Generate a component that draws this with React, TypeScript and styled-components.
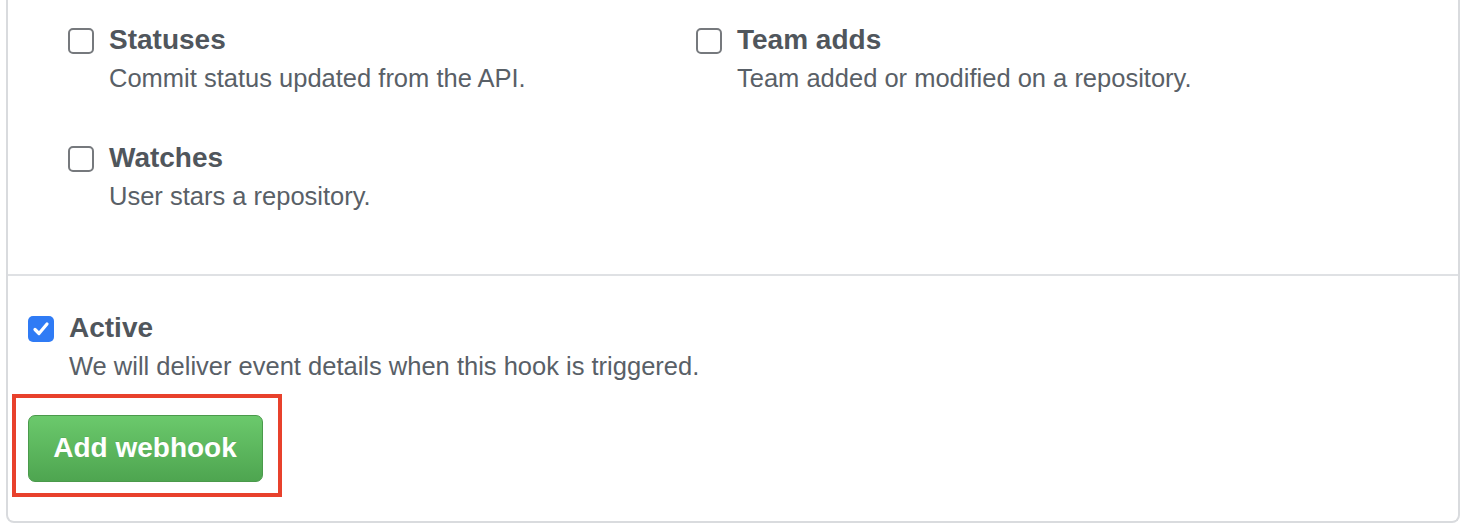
import React from "react";
import styled, { createGlobalStyle } from "styled-components";

const Global = createGlobalStyle`
  html, body { margin: 0; padding: 0; background: #ffffff; }
  body { font-family: "Liberation Sans", Arial, sans-serif; }
  * { box-sizing: border-box; }
`;

const Page = styled.div`
  width: 1468px;
  height: 530px;
  padding: 0 8px 7px 6px;
  overflow: hidden;
`;

const Panel = styled.div`
  height: 523px;
  border: 2px solid #d9dbde;
  border-top: none;
  border-radius: 0 0 8px 8px;
  display: flex;
  flex-direction: column;
`;

const Events = styled.div`
  display: grid;
  grid-template-columns: 628px 628px;
  align-content: start;
  row-gap: 45px;
  padding: 22px 0 0 60px;
  height: 276px;
  border-bottom: 2px solid #dfe1e4;
`;

const Item = styled.label`
  display: flex;
  align-items: flex-start;
  gap: 15px;
`;

const Box = styled.span<{ $checked?: boolean }>`
  flex: none;
  width: 26px;
  height: 26px;
  margin-top: 6px;
  border-radius: 5px;
  border: ${(p) => (p.$checked ? "none" : "2px solid #76797d")};
  background: ${(p) => (p.$checked ? "#2f7bf5" : "#ffffff")};
  display: flex;
  align-items: center;
  justify-content: center;
`;

const Text = styled.div`
  display: flex;
  flex-direction: column;
`;

const Title = styled.div`
  font-weight: 700;
  font-size: 28px;
  line-height: 36px;
  color: #50565c;
`;

const Desc = styled.div`
  font-size: 25.5px;
  line-height: 34px;
  margin-top: 3px;
  color: #596067;
`;

const ActiveSection = styled.div`
  padding: 34px 0 0 20px;
  display: flex;
  flex-direction: column;
`;

const Highlight = styled.div`
  align-self: flex-start;
  margin: 11px 0 0 -16px;
  border: 4.5px solid #e8412c;
  padding: 16.5px 15.5px 11.5px 11.5px;
`;

const Button = styled.button`
  width: 235px;
  height: 67px;
  border-radius: 7px;
  border: 1.5px solid #4a9a4b;
  background: linear-gradient(180deg, #6bc96c 0%, #4ea550 100%);
  color: #ffffff;
  font-family: "Liberation Sans", Arial, sans-serif;
  font-weight: 700;
  font-size: 28px;
  padding: 0;
  text-shadow: 0 -1px 0 rgba(0, 0, 0, 0.08);
`;

const Check = () => (
  <svg width="18" height="16" viewBox="0 0 18 16">
    <path d="M3 8.5 L7 12.5 L15 3" fill="none" stroke="#ffffff" strokeWidth="3.2" strokeLinecap="round" strokeLinejoin="round" />
  </svg>
);

const events = [
  { title: "Statuses", desc: "Commit status updated from the API." },
  { title: "Team adds", desc: "Team added or modified on a repository." },
  { title: "Watches", desc: "User stars a repository." },
];

export default function App() {
  return (
    <>
      <Global />
      <Page>
        <Panel>
          <Events>
            {events.map((e) => (
              <Item key={e.title}>
                <Box />
                <Text>
                  <Title>{e.title}</Title>
                  <Desc>{e.desc}</Desc>
                </Text>
              </Item>
            ))}
          </Events>
          <ActiveSection>
            <Item>
              <Box $checked>
                <Check />
              </Box>
              <Text>
                <Title>Active</Title>
                <Desc>We will deliver event details when this hook is triggered.</Desc>
              </Text>
            </Item>
            <Highlight>
              <Button>Add webhook</Button>
            </Highlight>
          </ActiveSection>
        </Panel>
      </Page>
    </>
  );
}
